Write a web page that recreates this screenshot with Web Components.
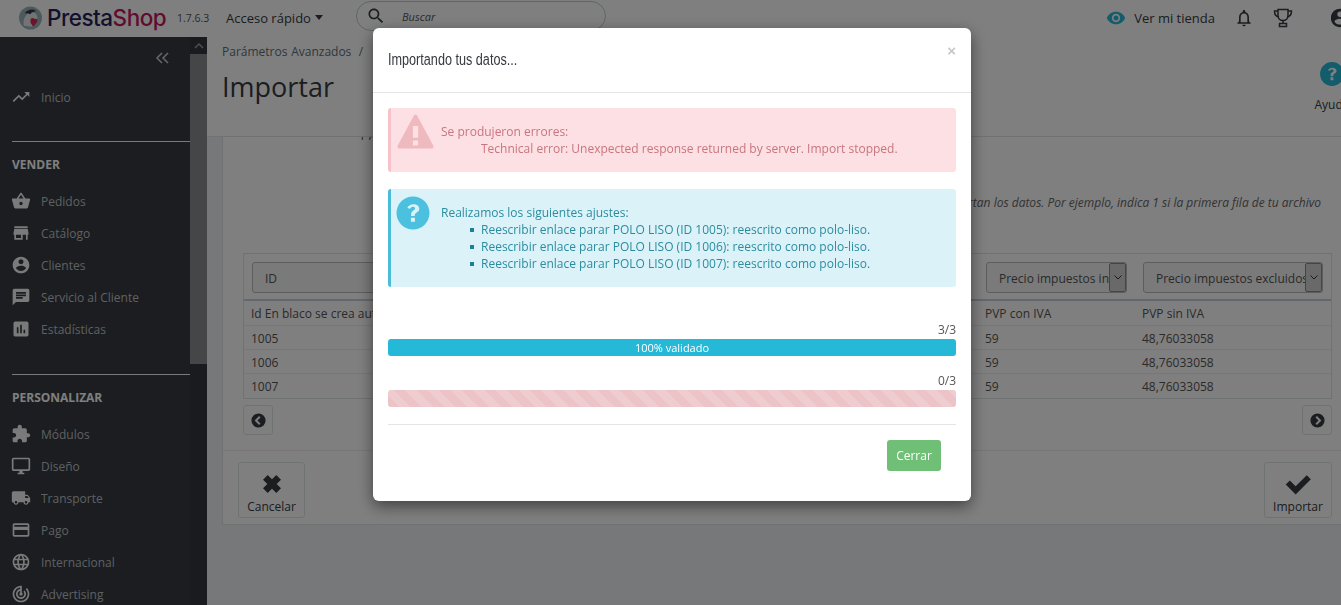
<!DOCTYPE html>
<html lang="es"><head><meta charset="utf-8"><title>Importar</title>
<style>
html,body{margin:0;padding:0;height:605px;overflow:hidden;background:#eff1f2;font-family:"Open Sans",sans-serif;font-size:12px;color:#363a41}
ps-shell{width:1341px;height:605px}
</style></head>
<body>
<ps-shell>
  <ps-header></ps-header>
  <div style="display:flex;height:568px;overflow:hidden">
    <ps-sidebar></ps-sidebar>
    <ps-main></ps-main>
  </div>
</ps-shell>
<ps-modal>
  <ps-alert kind="error" title="Se produjeron errores:"><div>Technical error: Unexpected response returned by server. Import stopped.</div></ps-alert>
  <ps-alert kind="info" title="Realizamos los siguientes ajustes:">
    <div class="b">Reescribir enlace parar POLO LISO (ID 1005): reescrito como polo-liso.</div>
    <div class="b">Reescribir enlace parar POLO LISO (ID 1006): reescrito como polo-liso.</div>
    <div class="b">Reescribir enlace parar POLO LISO (ID 1007): reescrito como polo-liso.</div>
  </ps-alert>
  <ps-progress count="3/3" label="100% validado" kind="info"></ps-progress>
  <ps-progress count="0/3" kind="danger"></ps-progress>
</ps-modal>
<script>
const P={
trend:'M16 6l2.29 2.29-4.88 4.88-4-4L2 16.59 3.41 18l6-6 4 4 6.3-6.29L22 12V6z',
basket:'M17.21 9l-4.38-6.56c-.19-.28-.51-.42-.83-.42-.32 0-.64.14-.83.43L6.79 9H2c-.55 0-1 .45-1 1 0 .09.01.18.04.27l2.54 9.27c.23.84 1 1.46 1.92 1.46h13c.92 0 1.69-.62 1.93-1.46l2.54-9.27L23 10c0-.55-.45-1-1-1h-4.79zM9 9l3-4.4L15 9H9zm3 8c-1.1 0-2-.9-2-2s.9-2 2-2 2 .9 2 2-.9 2-2 2z',
store:'M20 4H4v2h16V4zm1 10v-2l-1-5H4l-1 5v2h1v6h10v-6h4v6h2v-6h1zm-9 4H6v-4h6v4z',
user:'M12 2C6.48 2 2 6.48 2 12s4.48 10 10 10 10-4.48 10-10S17.52 2 12 2zm0 3c1.66 0 3 1.34 3 3s-1.34 3-3 3-3-1.34-3-3 1.34-3 3-3zm0 14.2c-2.5 0-4.71-1.28-6-3.22.03-1.99 4-3.08 6-3.08 1.99 0 5.97 1.09 6 3.08-1.29 1.94-3.5 3.22-6 3.22z',
chat:'M20 2H4c-1.1 0-1.99.9-1.99 2L2 22l4-4h14c1.1 0 2-.9 2-2V4c0-1.1-.9-2-2-2zM6 9h12v2H6V9zm8 5H6v-2h8v2zm4-6H6V6h12v2z',
stats:'M19 3H5c-1.1 0-2 .9-2 2v14c0 1.1.9 2 2 2h14c1.1 0 2-.9 2-2V5c0-1.1-.9-2-2-2zM9 17H7v-7h2v7zm4 0h-2V7h2v10zm4 0h-2v-4h2v4z',
puzzle:'M20.5 11H19V7c0-1.1-.9-2-2-2h-4V3.5C13 2.12 11.88 1 10.5 1S8 2.12 8 3.5V5H4c-1.1 0-1.99.9-1.99 2v3.8H3.5c1.49 0 2.7 1.21 2.7 2.7s-1.21 2.7-2.7 2.7H2V20c0 1.1.9 2 2 2h3.8v-1.5c0-1.49 1.21-2.7 2.7-2.7 1.49 0 2.7 1.21 2.7 2.7V22H17c1.1 0 2-.9 2-2v-4h1.5c1.38 0 2.5-1.12 2.5-2.5S21.88 11 20.5 11z',
desktop:'M21 2H3c-1.1 0-2 .9-2 2v12c0 1.1.9 2 2 2h7v2H8v2h8v-2h-2v-2h7c1.1 0 2-.9 2-2V4c0-1.1-.9-2-2-2zm0 14H3V4h18v12z',
truck:'M20 8h-3V4H3c-1.1 0-2 .9-2 2v11h2c0 1.66 1.34 3 3 3s3-1.34 3-3h6c0 1.66 1.34 3 3 3s3-1.34 3-3h2v-5l-3-4zM6 18.5c-.83 0-1.5-.67-1.5-1.5s.67-1.5 1.5-1.5 1.5.67 1.5 1.5-.67 1.5-1.5 1.5zm13.5-9l1.96 2.5H17V9.5h2.5zm-1.5 9c-.83 0-1.5-.67-1.5-1.5s.67-1.5 1.5-1.5 1.5.67 1.5 1.5-.67 1.5-1.5 1.5z',
card:'M20 4H4c-1.11 0-1.99.89-1.99 2L2 18c0 1.11.89 2 2 2h16c1.11 0 2-.89 2-2V6c0-1.11-.89-2-2-2zm0 14H4v-6h16v6zm0-10H4V6h16v2z',
globe:'M11.99 2C6.47 2 2 6.48 2 12s4.47 10 9.99 10C17.52 22 22 17.52 22 12S17.52 2 11.99 2zm6.93 6h-2.95c-.32-1.25-.78-2.45-1.38-3.56 1.84.63 3.37 1.91 4.33 3.56zM12 4.04c.83 1.2 1.48 2.53 1.91 3.96h-3.82c.43-1.43 1.08-2.76 1.91-3.96zM4.26 14C4.1 13.36 4 12.69 4 12s.1-1.36.26-2h3.38c-.08.66-.14 1.32-.14 2 0 .68.06 1.34.14 2H4.26zm.82 2h2.95c.32 1.25.78 2.45 1.38 3.56-1.84-.63-3.37-1.9-4.33-3.56zm2.95-8H5.08c.96-1.66 2.49-2.93 4.33-3.56C8.81 5.55 8.35 6.75 8.03 8zM12 19.96c-.83-1.2-1.48-2.53-1.91-3.96h3.82c-.43 1.43-1.08 2.76-1.91 3.96zM14.34 14H9.66c-.09-.66-.16-1.32-.16-2 0-.68.07-1.35.16-2h4.68c.09.65.16 1.32.16 2 0 .68-.07 1.34-.16 2zm.25 5.56c.6-1.11 1.06-2.31 1.38-3.56h2.95c-.96 1.65-2.49 2.93-4.33 3.56zM16.36 14c.08-.66.14-1.32.14-2 0-.68-.06-1.34-.14-2h3.38c.16.64.26 1.31.26 2s-.1 1.36-.26 2h-3.38z',
target:'M19.07 4.93l-1.41 1.41C19.1 7.79 20 9.79 20 12c0 4.42-3.58 8-8 8s-8-3.58-8-8c0-4.08 3.05-7.44 7-7.93v2.02C8.16 6.57 6 9.03 6 12c0 3.31 2.69 6 6 6s6-2.69 6-6c0-1.66-.67-3.16-1.76-4.24l-1.41 1.41C15.55 9.9 16 10.9 16 12c0 2.21-1.79 4-4 4s-4-1.79-4-4c0-1.86 1.28-3.41 3-3.86v2.14c-.6.35-1 .98-1 1.72 0 1.1.9 2 2 2s2-.9 2-2c0-.74-.4-1.38-1-1.72V2h-1C6.48 2 2 6.48 2 12s4.48 10 10 10 10-4.48 10-10c0-2.76-1.12-5.26-2.93-7.07z',
eye:'M12 4.5C7 4.5 2.73 7.61 1 12c1.73 4.39 6 7.5 11 7.5s9.27-3.11 11-7.5c-1.73-4.39-6-7.5-11-7.5zM12 17c-2.76 0-5-2.24-5-5s2.24-5 5-5 5 2.24 5 5-2.24 5-5 5zm0-8c-1.66 0-3 1.34-3 3s1.34 3 3 3 3-1.34 3-3-1.34-3-3-3z',
bell:'M12 22c1.1 0 2-.9 2-2h-4c0 1.1.9 2 2 2zm6-6v-5c0-3.07-1.63-5.64-4.5-6.32V4c0-.83-.67-1.5-1.5-1.5s-1.5.67-1.5 1.5v.68C7.64 5.36 6 7.92 6 11v5l-2 2v1h16v-1l-2-2zm-2 1H8v-6c0-2.48 1.51-4.5 4-4.5s4 2.02 4 4.5v6z',
search:'M15.5 14h-.79l-.28-.27C15.41 12.59 16 11.11 16 9.5 16 5.91 13.09 3 9.5 3S3 5.91 3 9.5 5.91 16 9.5 16c1.61 0 3.09-.59 4.23-1.57l.27.28v.79l5 4.99L20.49 19l-4.99-5zm-6 0C7.01 14 5 11.99 5 9.5S7.01 5 9.5 5 14 7.01 14 9.5 11.99 14 9.5 14z',
question:'M12 1a11 11 0 1 0 0 22 11 11 0 0 0 0-22zm1.300 16.800h-2.700v-2.700h2.700v2.700zm1.100-6.200c-.9.6-1.200 1-1.200 1.900v.5h-2.500v-.700c0-1.400.5-2.200 1.500-2.900.8-.6 1.200-.9 1.200-1.500 0-.7-.6-1.100-1.400-1.100-.9 0-1.600.5-2 1.300L8.200 8.600C9 7.100 10.400 6.200 12.400 6.200c2.200 0 3.800 1.200 3.800 3.100 0 1.100-.6 1.700-1.800 2.300z',
warn:'M12 1.200c.6 0 1 .3 1.300.9l10.300 19.200c.4.800-.1 1.700-1 1.700H1.400c-.9 0-1.400-.9-1-1.700L10.700 2.100c.3-.6.7-.9 1.300-.9zm-1.700 7.300v7.500h3.400V8.500h-3.400zm0 9.300V21h3.400v-3.200h-3.400z',
left:'M12 2a10 10 0 1 0 0 20 10 10 0 0 0 0-20zm2.800 14.300-2 2L6.500 12l6.300-6.300 2 2L10.500 12l4.300 4.300z',
right:'M12 2a10 10 0 1 0 0 20 10 10 0 0 0 0-20zm-.800 16.300-2-2 4.300-4.300-4.300-4.300 2-2 6.300 6.300-6.300 6.300z',
close:'M4.300 8.300 8.300 4.300 12 8 15.700 4.300 19.700 8.300 16 12 19.700 15.700 15.700 19.700 12 16 8.300 19.700 4.300 15.700 8 12z',
check:'M1.500 12.500 5 9l5 5L19.500 4.500 23 8 10 21z'
};
const icon=(n,s,c,extra='')=>`<svg width="${s}" height="${s}" viewBox="0 0 24 24" fill="${c}" style="display:block;flex:none;${extra}" aria-hidden="true"><path d="${P[n]}"/></svg>`;
function def(name,render){customElements.define(name,class extends HTMLElement{constructor(){super();this.attachShadow({mode:'open'}).innerHTML=render(this)}})}

def('ps-shell',()=>`<style>:host{display:block;overflow:hidden}</style><slot></slot>`);

def('ps-header',()=>`<style>
:host{display:flex;align-items:center;height:37px;box-sizing:border-box;padding-bottom:2px;background:#fff;color:#363a41}
.logo{display:flex;align-items:center;margin-left:19px;width:207px;flex:none}
.word{font:500 22.500px/30px "Inter","Open Sans",sans-serif;letter-spacing:-.5px;margin-left:5px;color:#2a1f5c;white-space:nowrap;width:119px;flex:none}
.word b{font-weight:500;color:#c5175e}
.ver{font-size:10.500px;margin-left:11px;color:#555;white-space:nowrap}
.quick{font-size:13px;display:flex;align-items:center;gap:4px;width:130px;flex:none}
.caret{width:0;height:0;border:4px solid transparent;border-top:5px solid #363a41;border-bottom:0}
.search{width:248px;height:28px;border:1px solid #bbcdd2;border-radius:15px;display:flex;align-items:center;margin-top:-3px;flex:none;box-sizing:content-box}
.search svg{margin-left:9px}
.search span{font:italic 11px "Open Sans",sans-serif;margin-left:16px;color:#555}
.right{margin-left:auto;display:flex;align-items:center}
.shop{font-size:13px;margin-left:8px;margin-right:19px;white-space:nowrap}
</style>
<div class="logo">
  <svg width="23" height="24" viewBox="0 0 24 24" style="flex:none"><circle cx="12" cy="12" r="12" fill="#9bb4ba"/><path d="M5 20c-1-7 2-13 8-14 4 0 7 3 6 7l-4 1-1 7z" fill="#e6ebe8"/><path d="M6 7c3-4 9-5 12-2-3 0-5 1-6 3-2-1-4-1-6-1z" fill="#34394a"/><path d="M12 14c0-2 3-3 4-1 2-1 4 1 3 3l-4 5-3-4z" fill="#d7285f"/></svg>
  <span class="word">Presta<b>Shop</b></span><span class="ver">1.7.6.3</span>
</div>
<div class="quick">Acceso rápido<i class="caret"></i></div>
<div class="search">${icon('search',20,'#363a41')}<span>Buscar</span></div>
<div class="right">
  ${icon('eye',20,'#25b9d7')}<span class="shop">Ver mi tienda</span>
  ${icon('bell',20,'#363a41')}
  <div style="width:19px"></div>
  <svg width="20" height="20" viewBox="0 0 20 20" fill="none" stroke="#363a41" stroke-width="1.500" style="display:block;flex:none"><path d="M5 1.500h10v6c0 3-2.200 5-5 5s-5-2-5-5z"/><path d="M5 3H1.500c0 3.500 1.500 5.500 4.500 6M15 3h3.500c0 3.500-1.500 5.500-4.500 6"/><path d="M10 12.500v3M6.500 15.500h7v3h-7z"/></svg>
  <div style="width:38px"></div>
  <div style="width:10px;overflow:hidden">${icon('user',22,'#363a41','margin-left:-2px')}</div>
</div>`);

def('ps-nav-item',h=>`<style>
:host{display:flex;align-items:center;height:32px;padding-left:11px;color:#bfc1c4;font-size:12px}
span{margin-left:10px}
</style>${icon(h.getAttribute('icon'),20,'#f4f5f6')}<span><slot></slot></span>`);

def('ps-nav-head',()=>`<style>:host{display:block;border-top:1px solid #f4f5f6;margin-left:12px;height:43px;line-height:45px;font-weight:700;color:#fff;font-size:12px;box-sizing:content-box}</style><slot></slot>`);

def('ps-sidebar',()=>`<style>
:host{display:flex;width:207px;flex:none;background:#363a41;height:568px;overflow:hidden}
.col{width:190px;flex:none}
.bar{width:17px;display:flex;flex-direction:column;flex:none;background:#34373d}
.arrow{height:17px;display:flex;align-items:center;justify-content:center}
.thumb{height:310px;background:#8b8c8e}
.collapse{height:44px;display:flex;justify-content:flex-end;align-items:center;padding:0 21px 2px 0;box-sizing:border-box}
</style>
<div class="col">
  <div class="collapse"><svg width="14" height="12" viewBox="0 0 14 12" fill="none" stroke="#c9cbcd" stroke-width="1.600"><path d="M7 1 2 6l5 5M13 1 8 6l5 5"/></svg></div>
  <ps-nav-item icon="trend">Inicio</ps-nav-item>
  <div style="height:28px"></div>
  <ps-nav-head>VENDER</ps-nav-head>
  <ps-nav-item icon="basket">Pedidos</ps-nav-item>
  <ps-nav-item icon="store">Catálogo</ps-nav-item>
  <ps-nav-item icon="user">Clientes</ps-nav-item>
  <ps-nav-item icon="chat">Servicio al Cliente</ps-nav-item>
  <ps-nav-item icon="stats">Estadísticas</ps-nav-item>
  <div style="height:29px"></div>
  <ps-nav-head>PERSONALIZAR</ps-nav-head>
  <ps-nav-item icon="puzzle">Módulos</ps-nav-item>
  <ps-nav-item icon="desktop">Diseño</ps-nav-item>
  <ps-nav-item icon="truck">Transporte</ps-nav-item>
  <ps-nav-item icon="card">Pago</ps-nav-item>
  <ps-nav-item icon="globe">Internacional</ps-nav-item>
  <ps-nav-item icon="target">Advertising</ps-nav-item>
</div>
<div class="bar"><div class="arrow"><svg width="10" height="6" viewBox="0 0 10 6" fill="none" stroke="#9a9c9e" stroke-width="1.500"><path d="M1 5l4-4 4 4"/></svg></div><div class="thumb"></div></div>`);

def('ps-select',h=>`<style>
:host{display:flex;height:31px;box-sizing:border-box;border:1px solid #bbb;border-radius:3px;background:#f4f4f4;align-items:stretch;overflow:hidden;font-size:12px;color:#555}
.t{flex:1;min-width:0;overflow:hidden;white-space:nowrap;line-height:31px;padding-left:12px}
.a{width:17px;flex:none;background:#d2d2d2;border:1px solid #8a8a8a;border-radius:2px;display:flex;align-items:center;justify-content:center;box-sizing:border-box}
</style><div class="t"><slot></slot></div>${h.hasAttribute('noarrow')?'':`<div class="a"><svg width="8" height="5" viewBox="0 0 8 5" fill="none" stroke="#333" stroke-width="1"><path d="M.5.500 4 4 7.500.500"/></svg></div>`}`);

def('ps-data-table',()=>{
  const rows=[['Id En blaco se crea automáticamente','PVP con IVA','PVP sin IVA'],['1005','59','48,76033058'],['1006','59','48,76033058'],['1007','59','48,76033058']];
  return `<style>
:host{display:block;border:1px solid #dfe4e6;box-sizing:border-box;font-size:12px;color:#555}
.top,.row{display:grid;grid-template-columns:734px 157px 196px}
.top{height:47px;align-items:start;padding-top:8px;box-sizing:border-box;border-bottom:2px solid #c3d1d7}
.cell{padding:0 8px;box-sizing:border-box;min-width:0}
.row{height:24px;line-height:25px;border-bottom:1px solid #eee;box-sizing:border-box}
.row:last-child{border-bottom:0}
.row.first{height:25px;line-height:25px}
.row .cell{padding-left:7px}
.c1{overflow:hidden;white-space:nowrap}
</style>
<div class="top"><div class="cell" style="padding-right:300px"><ps-select noarrow>ID</ps-select></div><div class="cell"><ps-select>Precio impuestos incluidos</ps-select></div><div class="cell"><ps-select>Precio impuestos excluidos</ps-select></div></div>
${rows.map((r,i)=>`<div class="row${i==0?' first':''}"><div class="cell c1">${r[0]}</div><div class="cell">${r[1]}</div><div class="cell">${r[2]}</div></div>`).join('')}`;
});

def('ps-toolbar-btn',h=>`<style>
:host{display:flex;flex-direction:column;align-items:center;box-sizing:border-box;height:56px;width:${h.getAttribute('w')}px;border:1px solid #dfe4e6;border-radius:3px;padding-top:7px;font-size:12px;color:#363a41;background:#fff}
span{margin-top:1px;line-height:16px}
</style>${icon(h.getAttribute('icon'),28,'#363a41')}<span><slot></slot></span>`);

def('ps-page-nav',h=>`<style>
:host{display:flex;width:30px;height:30px;box-sizing:border-box;border:1px solid #dfe4e6;border-radius:3px;align-items:center;justify-content:center;background:#fff}
</style>${icon(h.getAttribute('icon'),17,'#363a41')}`);

def('ps-main',()=>`<style>
:host{display:block;flex:1;min-width:0;height:568px;overflow:hidden;background:#eff1f2;color:#363a41}
.head{display:flex;justify-content:space-between;height:99px;box-sizing:content-box;background:#fff;border-bottom:1px solid #dfe4e6;padding-left:15px;margin-right:-9px}
.bc{font-size:12px;margin-top:6px;line-height:17px;color:#5f6f75;word-spacing:.6px}
h1{font:400 27px/34px "Open Sans",sans-serif;margin:10px 0 0;color:#363a41}
.help{display:flex;flex-direction:column;align-items:center;width:36px;padding-top:24px;font-size:12px}
.help span{margin-top:10px;line-height:16px}
.panel{margin-left:15px;height:388px;box-sizing:border-box;background:#fff;border-left:1px solid #dfe4e6;border-bottom:1px solid #dfe4e6}
.body{padding:0 9px 0 20px}
.frag{height:3px;line-height:3px;overflow:hidden;margin:0 0 54px 118px;font-size:12px;color:#555}
.note{font:italic 12px/18px "Open Sans",sans-serif;color:#666;white-space:nowrap;text-align:right;height:18px;margin-right:11px}
ps-data-table{margin-top:41px}
.pager{display:flex;justify-content:space-between;margin-top:6px}
.foot{margin-top:15px;border-top:1px solid #eee;padding:11px 9px 0 15px;display:flex;justify-content:space-between}
</style>
<div class="head">
  <div><div class="bc">Parámetros Avanzados &nbsp;/</div><h1>Importar</h1></div>
  <div class="help">${icon('question',26,'#25b9d7')}<span>Ayuda</span></div>
</div>
<div class="panel">
  <div class="body">
    <div class="frag">Co</div>
    <div class="note">importan los datos. Por ejemplo, indica 1 si la primera fila de tu archivo</div>
    <ps-data-table></ps-data-table>
    <div class="pager"><ps-page-nav icon="left"></ps-page-nav><ps-page-nav icon="right"></ps-page-nav></div>
  </div>
  <div class="foot"><ps-toolbar-btn icon="close" w="67">Cancelar</ps-toolbar-btn><ps-toolbar-btn icon="check" w="68">Importar</ps-toolbar-btn></div>
</div>`);

def('ps-alert',h=>{
  const err=h.getAttribute('kind')=='error';
  return `<style>
:host{display:flex;box-sizing:border-box;border-radius:3px;border-left:3px solid ${err?'#f5c3c9':'#4bbcd8'};background:${err?'#fde0e3':'#dcf2f9'};color:${err?'#c9757f':'#2a8d9f'};font-size:12px;line-height:17px;min-height:${err?64:98}px;padding:15px 0 0 7px}
.ic{width:43px;flex:none}
::slotted(*){padding-left:40px}
::slotted(.b){background:radial-gradient(circle 2.500px at 31px 9px,#1d7f90 95%,transparent) no-repeat}
</style>
<div class="ic" style="margin-top:${err?'-10px':'-9px'}">${err?icon('warn',37,'#eeb9bf','margin-left:-1px'):icon('question',36,'#4bc0df','margin-left:-3px')}</div>
<div><div>${h.getAttribute('title')}</div><div><slot></slot></div></div>`;
});

def('ps-progress',h=>{
  const info=h.getAttribute('kind')=='info';
  return `<style>
:host{display:block;font-size:12px}
.c{text-align:right;line-height:17px;color:#555;height:18px}
.b{height:17px;border-radius:3px;text-align:center;color:#fff;font-size:11px;line-height:17px;background:${info?'#25b9d7':'repeating-linear-gradient(45deg,#ecc3c7 0 8px,#efcccf 8px 16px)'}}
</style><div class="c">${h.getAttribute('count')}</div><div class="b">${h.getAttribute('label')||''}</div>`;
});

def('ps-modal',()=>`<style>
:host{position:fixed;inset:0;background:rgba(0,0,0,.5);display:block}
.dialog{width:598px;height:473px;margin:28px 0 0 373px;background:#fff;border-radius:6px;box-shadow:0 5px 15px rgba(0,0,0,.5);box-sizing:border-box;color:#363a41}
.hd{height:65px;box-sizing:border-box;border-bottom:1px solid #e5e5e5;display:flex;justify-content:space-between;padding:0 15px}
h4{margin:22px 0 0;font:400 16px/20px "Liberation Sans",sans-serif;color:#363a41;transform:scaleX(.79);transform-origin:left center;white-space:nowrap}
.x{font:700 15px/15px "Liberation Sans",sans-serif;color:#c8c8c8;margin-top:15px}
.bd{padding:15px 15px 0}
hr{border:0;border-top:1px solid #e5e5e5;margin:17px 0 0}
.ft{display:flex;justify-content:flex-end;padding:15px 15px 0 0}
.btn{width:54px;height:31px;border-radius:3px;background:#70bf76;color:#fff;font-size:12px;line-height:31px;text-align:center}
</style>
<div class="dialog">
  <div class="hd"><h4>Importando tus datos...</h4><span class="x">×</span></div>
  <div class="bd">
    <slot></slot>
    <hr>
    <div class="ft"><div class="btn">Cerrar</div></div>
  </div>
</div>`);

const st=document.createElement('style');
st.textContent='ps-alert+ps-alert{margin-top:17px}ps-alert+ps-progress{margin-top:34px}ps-progress+ps-progress{margin-top:16px}';
document.head.appendChild(st);
</script>
</body></html>
